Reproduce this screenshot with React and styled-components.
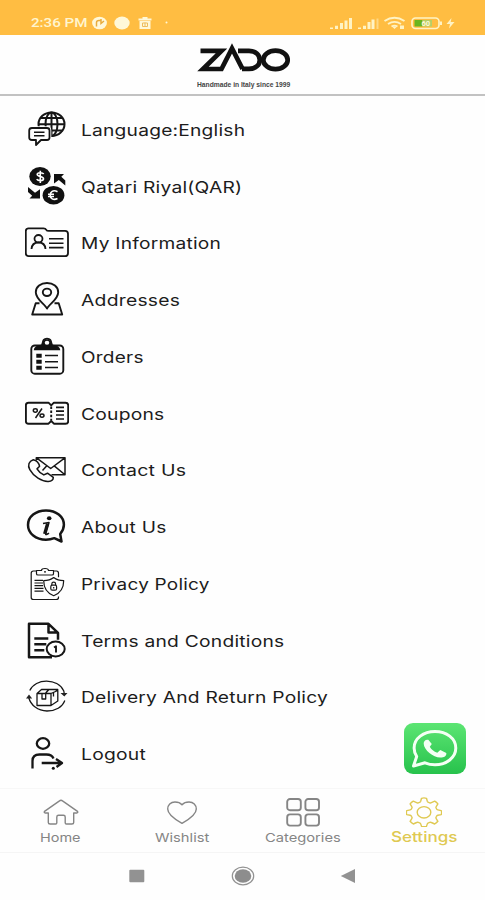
import React from 'react'
import styled, {createGlobalStyle} from 'styled-components'

const GlobalStyle = createGlobalStyle`
    * {
        box-sizing: border-box;
    }
    body {
        margin: 0;
        background: #fefefe;
        font-family: Inter, Roboto, "Liberation Sans", sans-serif;
    }
    svg {
        display: block;
        flex: none;
    }
`

/* ---------- menu icons, all on a 44x44 board ---------- */

const LanguageIcon = () => (
    <MenuSvg viewBox="0 0 44 44" $line={2}>
        <ellipse cx="26.5" cy="16.2" rx="13" ry="11.8"/>
        <ellipse cx="26.5" cy="16.2" rx="6" ry="11.8"/>
        <path d="M26.5 4v24M13.5 16.2h26M15.5 10h22M15.5 22.4h22"/>
        <path d="M7 20h15q2.5 0 2.5 2.5v7q0 2.5-2.5 2.5h-6l-4.5 4.500v-4.500h-4.500q-2.800 0-2.800-2.500v-7q0-2.500 2.800-2.500z" fill="#fff" stroke="#fff" strokeWidth="3.600"/>
        <path d="M7 20h15q2.500 0 2.500 2.500v7q0 2.500-2.500 2.500h-6l-5 5v-5h-4q-2.800 0-2.800-2.500v-7q0-2.500 2.800-2.500z" strokeWidth="1.800"/>
        <path d="M9 24.300h10.500M9 27.800h10.500" strokeWidth="1.500"/>
    </MenuSvg>
)

const CurrencyIcon = () => (
    <MenuSvg viewBox="0 0 44 44" $line={2}>
        <ellipse cx="15" cy="11.500" rx="10.700" ry="9.600" fill="#111" stroke="none"/>
        <ellipse cx="28.500" cy="30.200" rx="10.900" ry="9.300" fill="#111" stroke="none"/>
        <path d="M18.700 9c-1-1.600-6.500-2-6.500.5 0 2.400 6.300 1.600 6.300 4.200 0 2.600-5.500 2.400-6.800.4M15.300 5.700v12.200" stroke="#fff" strokeWidth="1.600"/>
        <path d="M32.500 26.700c-4.500-2.400-7.300.4-7.300 3.500s3 5.600 7.300 3.300M23 29.200h6M23 31.500h6" stroke="#fff" strokeWidth="1.600"/>
        <path d="M29 9h10l-2.700 2.700 4 3.800v5l-6.500-5.500-4.800 3.500z" fill="#111" stroke="none"/>
        <path d="M15 33.500h-10.500l2.700-2.700-4.200-3.800v-5l7 5.700 5-3.500z" fill="#111" stroke="none"/>
    </MenuSvg>
)

const InformationIcon = () => (
    <MenuSvg viewBox="0 0 44 44" $line={1.8}>
        <path d="M3.500 7.300h15q2 0 2.800 1.500.5 1 2.500 1h16.200q3 0 3 3v19.400q0 3-3 3h-36.200q-3 0-3-3v-22q0-2.900 2.700-2.900z"/>
        <ellipse cx="13.500" cy="17.700" rx="4" ry="3.700"/>
        <path d="M6.500 28q.5-6.500 7-6.500t7 6.500"/>
        <path d="M24 17.800h14.500M24 22.200h14.500M24 26.600h14.500" strokeWidth="1.600"/>
    </MenuSvg>
)

const AddressIcon = () => (
    <MenuSvg viewBox="0 0 44 44" $line={1.9}>
        <path d="M22 30.500c-2-4.500-11.200-9-11.200-16.300 0-5.500 5-9.200 11.200-9.200s11.200 3.700 11.200 9.200c0 7.300-9.200 11.800-11.200 16.300z"/>
        <ellipse cx="22" cy="14.300" rx="4.200" ry="3.700"/>
        <path d="M14.500 25.300h-3.800l-3.500 11.200h30l-3.500-11.200h-4.200"/>
    </MenuSvg>
)

const OrdersIcon = () => (
    <MenuSvg viewBox="0 0 44 44" $line={1.9}>
        <rect x="6.300" y="10.500" width="32" height="28.200" rx="3.500"/>
        <path d="M8.700 15.200q.5-5 7.500-5.500.6-5 5.800-5t5.800 5q7 .5 7.500 5.500z" fill="#111" stroke="none"/>
        <path d="M18 8.500q-.5-4.700 4-4.700t4 4.700"/>
        <ellipse cx="22" cy="7.700" rx="2.300" ry="2" fill="#fff" stroke="none"/>
        <path d="M11.300 18.700h5.400v4h-5.400zM11.300 24.700h5.400v4h-5.400zM11.300 30.700h5.400v4h-5.400z" fill="#111" stroke="none"/>
        <path d="M20 20.500h13M20 26.700h13M20 32.500h13" strokeWidth="1.500"/>
    </MenuSvg>
)

const CouponIcon = () => (
    <MenuSvg viewBox="0 0 44 44" $line={1.9}>
        <path d="M3.500 10.700h20l2.700 2.700 2.700-2.700h11.600q2.700 0 2.700 2.500v16q0 2.500-2.700 2.500h-11.600l-2.700-2.700-2.700 2.700h-20q-2.600 0-2.600-2.500v-16q0-2.500 2.600-2.500z"/>
        <path d="M26.200 14.500v14" strokeDasharray="2.500 1.600"/>
        <ellipse cx="10.300" cy="18.500" rx="2" ry="1.700" strokeWidth="1.500"/>
        <ellipse cx="17" cy="23.600" rx="2" ry="1.700" strokeWidth="1.500"/>
        <path d="M17 16.500l-6.500 9.500" strokeWidth="1.500"/>
        <path d="M31 15.300h8M31 19.200h8M31 23h8M31 27h8" strokeWidth="1.700"/>
    </MenuSvg>
)

const ContactIcon = () => (
    <MenuSvg viewBox="0 0 44 44" $line={1.5}>
        <path d="M11.300 12.500v-2.800h28.700v17h-13.500M11.500 9.900l14.200 10.600 14.200-10.600M39.700 26.500l-10.500-8.700M17.500 22.500l4.300-4.700"/>
        <path d="M8.300 11.700c-4.300 1.400-6 5.300-3.500 10 3.500 6.500 12.200 12 18.500 11.700 3-.2 5-2 5-4l-5.800-4.200-3.700 1.700c-3-1.500-5.300-3.300-6.800-6l2.600-2.600c-.6-2.800-2.800-5.700-6.300-6.600z"/>
    </MenuSvg>
)

const AboutIcon = () => (
    <MenuSvg viewBox="0 0 44 44" $line={2.5}>
        <path d="M36.500 36.500l-1.300-7.500c2.700-3.200 3.700-5.800 3.700-9.200 0-8.300-7.700-14.400-17.900-14.400s-18 6.100-18 14.600 7.900 14.700 18 14.700c3.300 0 5.700-.5 8.300-1.500z"/>
        <ellipse cx="24.200" cy="13.300" rx="2.300" ry="2" fill="#111" stroke="none"/>
        <path d="M18 18.500l6-1-3.300 11.500q0 1.500 3.300-.8" strokeWidth="1.500"/>
        <path d="M22.500 18.500l-3 10.300" strokeWidth="3"/>
    </MenuSvg>
)

const PrivacyIcon = () => (
    <MenuSvg viewBox="0 0 44 44" $line={1.2}>
        <path d="M11 9h-2.500q-2.300 0-2.300 2.200v24.300q0 2 2.300 2h22.700q2.300 0 2.300-2v-1M28.500 9h3q2 0 2 2.200v4"/>
        <path d="M11.500 8.500h5q0-2 3.500-2t3.500 2h5v3.200q0 1.300-1.500 1.300h-14q-1.500 0-1.500-1.300zM19 9.800h2M9.500 18.300h8.500M9.500 21h8.500M9.500 23.700h8.500M9.500 26.400h9M9.500 29.100h9"/>
        <path d="M28.700 15.500q4 3.200 10 3.200 0 11-10 15-10-4-10-15 6 0 10-3.200z" fill="#fff"/>
        <rect x="25.800" y="23.200" width="5.800" height="5" rx="1.500"/>
        <path d="M26.800 23v-1q0-1.800 1.900-1.800t1.900 1.800v1M28.700 25v1.500"/>
    </MenuSvg>
)

const TermsIcon = () => (
    <MenuSvg viewBox="0 0 44 44" $line={2.5}>
        <path d="M27 38.200h-23v-33.400h19.500l9.500 9v7M23.500 4.800v8.800h9.500M9.300 19.500h14M9.300 25.200h12M9.300 31.200h10"/>
        <ellipse cx="30.700" cy="30" rx="9" ry="7.500" fill="#fff" strokeWidth="2"/>
        <path d="M29 28.500l2-1.300v6.300" strokeWidth="1.900"/>
    </MenuSvg>
)

const DeliveryIcon = () => (
    <MenuSvg viewBox="0 0 44 44" $line={1.3}>
        <path d="M4.800 15.500c5.500-12.500 28-12.500 34 .5l.5 3M3.700 22.500c2 7.500 9 13.500 18.300 13.500 8.500 0 15.500-4 17.800-10.500"/>
        <path d="M35.500 18h7l-3.200 3.500zM1 23.500l3-4 3.200 4z" fill="#222" stroke="none"/>
        <path d="M12 18.500h14v12h-14zM26 30.500l6.800-4.500v-10.500l-6.800 3M12 18.500l4.500-4h16.300l-2 1.500M17 18v6h3.700v-6l3.300-3.500M20.700 18l3-3.500M28.500 17.500v4"/>
    </MenuSvg>
)

const LogoutIcon = () => (
    <MenuSvg viewBox="0 0 44 44" $line={2.3}>
        <ellipse cx="18" cy="11.500" rx="6.200" ry="5.300"/>
        <path d="M7.500 36.500v-7.500q0-6.500 7-6.500h7q5.500 0 7 4"/>
        <path d="M16.700 31h19M31 27l6 4-5.500 4"/>
        <circle cx="28.300" cy="36.300" r="1.500" fill="#111" stroke="none"/>
    </MenuSvg>
)

/* ---------- tab bar icons ---------- */

const HomeIcon = () => (
    <svg width="36" height="30" viewBox="0 0 36 30" fill="none" stroke="currentColor" strokeWidth="1.4" strokeLinejoin="round">
        <path d="M18 3.300q.8 0 1.500.6l15 10.500q.8 1.400-.8 1.600h-3v9.500q0 1.500-1.800 1.500h-5.500q-1.200 0-1.200-1.200v-5.800q0-1.700-1.800-1.700h-4.800q-1.800 0-1.800 1.700v5.800q0 1.200-1.200 1.200h-5.500q-1.800 0-1.800-1.500v-9.500h-3q-1.600-.2-.8-1.600l15-10.500q.7-.6 1.500-.6z"/>
    </svg>
)

const HeartIcon = () => (
    <svg width="36" height="30" viewBox="0 0 36 30" fill="none" stroke="currentColor" strokeWidth="1.4">
        <path d="M18 7.700c2-2.200 4.200-2.700 7-2.700 4.400 0 7.300 3 7.300 7 0 6-8.300 11-14.300 14.300-6-3.300-14.300-8.300-14.300-14.300 0-4 2.900-7 7.300-7 2.800 0 5 .5 7 2.700z"/>
    </svg>
)

const GridIcon = () => (
    <svg width="36" height="30" viewBox="0 0 36 30" fill="none" stroke="currentColor" strokeWidth="1.9">
        <rect x="2.200" y="2" width="13.600" height="11.200" rx="2.800"/>
        <rect x="20.400" y="2" width="13.600" height="11.200" rx="2.800"/>
        <rect x="2.200" y="17.400" width="13.600" height="11.200" rx="2.800"/>
        <rect x="20.400" y="17.400" width="13.600" height="11.200" rx="2.800"/>
    </svg>
)

const GearIcon = () => (
    <svg width="36" height="30" viewBox="0 0 36 30" fill="none" stroke="currentColor" strokeWidth="1.4" strokeLinejoin="round">
        <path d="M15.500 1.300q2.500-.8 5 0l.8 3q.3.800 1.200 1.100l1.200.4q.9.300 1.700-.1l3.300-1.500q2 1.200 3.200 2.700l-1.700 2.700q-.5.700-.1 1.400l.5 1q.3.700 1.200.9l3.500.7q.6 1.900 0 4l-3.500.7q-.9.200-1.200.9l-.5 1q-.4.700.1 1.400l1.700 2.700q-1.200 1.500-3.200 2.700l-3.300-1.500q-.8-.4-1.700-.1l-1.200.4q-.9.300-1.200 1.100l-.8 2.500q-2.500.8-5 0l-.8-2.500q-.3-.8-1.200-1.100l-1.200-.4q-.9-.3-1.700.1l-3.300 1.500q-2-1.200-3.200-2.700l1.700-2.700q.5-.7.100-1.400l-.5-1q-.3-.7-1.200-.9l-3.500-.7q-.6-2.100 0-4l3.500-.7q.9-.2 1.200-.9l.5-1q.4-.7-.1-1.400l-1.700-2.700q1.200-1.500 3.200-2.700l3.300 1.500q.8.400 1.700.1l1.200-.4q.9-.3 1.200-1.100z"/>
        <ellipse cx="18" cy="15.300" rx="6.800" ry="5.700"/>
    </svg>
)

const Logo = () => (
    <svg width="94" height="34" viewBox="0 0 94 34" fill="none" stroke="#111" strokeWidth="4.7" strokeMiterlimit="8">
        <path d="M4.500 7.900h21L7 26h18.500L36 5.500l10.500 20.300"/>
        <path d="M42 7.900h11c6.500 0 10.800 3.900 10.800 9s-4.300 9-10.800 9h-7"/>
        <ellipse cx="79.500" cy="16.900" rx="12.200" ry="9.200"/>
    </svg>
)

const StatusLeft = () => (
    <svg width="80" height="14" viewBox="0 0 80 14" fill="#fff8d8">
        <ellipse cx="7.500" cy="7" rx="7.400" ry="6.300"/>
        <path d="M4.500 10.500V6.500q0-2 2.500-2h2M9 3v4.500l3-2.500" fill="none" stroke="#e9ac3d" strokeWidth="1.500"/>
        <ellipse cx="30" cy="7" rx="7.700" ry="6.500"/>
        <path d="M46.500 2.500h4V1h5v1.500H59.500v2h-13zM47.500 5h11v8h-11z"/>
        <path d="M50.500 7v3.500h5V7zM53 6.500v4" fill="none" stroke="#eebd5c" strokeWidth="1"/>
        <circle cx="74.500" cy="6.500" r="1"/>
    </svg>
)

const StatusRight = () => (
    <svg width="126" height="14" viewBox="0 0 126 14" fill="#fff3c4">
        <path d="M0 11.500h3v1.500H0zM5 9.800h3V13H5zM10 7h3v6h-3zM14.500 4.500h3V13h-3zM19 2h3v11h-3z"/>
        <path d="M28 11.500h3v1.500h-3zM33 9.800h3V13h-3zM37.500 6h3v7h-3zM41.500 3.500h3V13h-3z"/>
        <path d="M46.500 2.500h2V13h-2z" opacity=".5"/>
        <g fill="none" stroke="#fff3c4" strokeWidth="1.9">
            <path d="M54.500 5q10-6.500 20 0M58 8q6.500-4.200 13 0M61.500 10.500q3-1.800 6 0"/>
        </g>
        <path d="M62 10.500h5L64.500 13zM70 9.500h4V13h-4z"/>
        <rect x="82" y="2" width="27" height="10.500" rx="3.500" fill="none" stroke="#fff3c4" strokeWidth="1.7"/>
        <path d="M84.500 4h8v6.500h-8z" fill="#69b51e"/>
        <path d="M92.500 4H102v6.500h-9.500z" fill="#b6cf68"/>
        <path d="M110 5.500h2V9h-2z"/>
        <text x="91.500" y="10" fontSize="7.500" fontWeight="700" fill="#fff8d8" fontFamily="Roboto">60</text>
        <path d="M121.500 2l-5 6h3.500l-1 4.500 5.500-6.500h-3.800z"/>
    </svg>
)

const menu = [
    {label: 'Language:English', icon: LanguageIcon, width: 164},
    {label: 'Qatari Riyal(QAR)', icon: CurrencyIcon, width: 161},
    {label: 'My Information', icon: InformationIcon, width: 140},
    {label: 'Addresses', icon: AddressIcon, width: 99},
    {label: 'Orders', icon: OrdersIcon, width: 63},
    {label: 'Coupons', icon: CouponIcon, width: 83},
    {label: 'Contact Us', icon: ContactIcon, width: 105},
    {label: 'About Us', icon: AboutIcon, width: 86},
    {label: 'Privacy Policy', icon: PrivacyIcon, width: 129},
    {label: 'Terms and Conditions', icon: TermsIcon, width: 203},
    {label: 'Delivery And Return Policy', icon: DeliveryIcon, width: 247},
    {label: 'Logout', icon: LogoutIcon, width: 65},
]

const tabs = [
    {label: 'Home', icon: HomeIcon, width: 41},
    {label: 'Wishlist', icon: HeartIcon, width: 54},
    {label: 'Categories', icon: GridIcon, width: 76},
    {label: 'Settings', icon: GearIcon, width: 67, active: true},
]

// stretches a line of text sideways until it fills the given width
function WideText({width, children, ...rest}) {
    const ref = React.useRef(null)
    const [scale, setScale] = React.useState(1)
    React.useLayoutEffect(() => {
        const fit = () => setScale(width / ref.current.offsetWidth)
        fit()
        document.fonts.ready.then(fit)
    }, [width])
    return (
        <WideBox {...rest} style={{width}}>
            <WideInner ref={ref} style={{transform: `scaleX(${scale})`}}>{children}</WideInner>
        </WideBox>
    )
}

export default function App() {
    return (
        <Screen>
            <GlobalStyle/>
            <StatusBar>
                <StatusGroup>
                    <Clock width={57}>2:36 PM</Clock>
                    <StatusLeft/>
                </StatusGroup>
                <StatusRight/>
            </StatusBar>
            <Header>
                <Logo/>
                <Tagline width={93}>Handmade in Italy since 1999</Tagline>
            </Header>
            <Menu>
                {menu.map(({label, icon: Icon, width}) => (
                    <MenuItem key={label}>
                        <Icon/>
                        <MenuLabel width={width}>{label}</MenuLabel>
                    </MenuItem>
                ))}
            </Menu>
            <WhatsappButton aria-label="WhatsApp">
                <svg width="62" height="52" viewBox="0 0 62 52">
                    <path d="M9.500 43l3.200-9.500c-1.800-2.800-2.600-5.500-2.600-8.500C10.100 15.500 19.500 8.500 31 8.500S51.800 15.500 51.800 25 42.500 41.800 31 41.800c-3.700 0-7-.7-10-2z" fill="none" stroke="#f4fff4" strokeWidth="3" strokeLinejoin="round"/>
                    <path d="M24.300 16.800c-2.700-.6-4.800 1.200-4.600 3.900.3 6.500 9.500 13.600 16.500 13.900 3.700.1 6.600-1.900 6.100-4.700l-6-2.900-3 2.700c-3.500-1.300-6-3.200-7.500-6l2-2.600z" fill="#f4fff4"/>
                </svg>
            </WhatsappButton>
            <TabBar>
                {tabs.map(({label, icon: Icon, width, active}) => (
                    <Tab key={label} $active={active}>
                        <Icon/>
                        <TabLabel width={width} $active={active}>{label}</TabLabel>
                    </Tab>
                ))}
            </TabBar>
            <SystemBar>
                <svg width="16" height="14" viewBox="0 0 16 14"><rect x=".3" y=".8" width="15" height="12.4" rx="1" fill="#929292"/></svg>
                <svg width="24" height="20" viewBox="0 0 24 20">
                    <ellipse cx="12" cy="10" rx="10.700" ry="8.800" fill="none" stroke="#929292" strokeWidth="1.2"/>
                    <ellipse cx="12" cy="10" rx="8.300" ry="6.800" fill="#8d8d8d"/>
                </svg>
                <svg width="16" height="16" viewBox="0 0 16 16"><path d="M.8 8L15 1v14z" fill="#929292"/></svg>
            </SystemBar>
        </Screen>
    )
}

const Screen = styled.div`
    position: relative;
    display: flex;
    flex-direction: column;
    width: 485px;
    height: 900px;
    overflow: hidden;
    background: #fefefe;
    color: #1c1c1c;
`

const WideBox = styled.div`
    white-space: nowrap;
`

const WideInner = styled.span`
    display: inline-block;
    transform-origin: 0 50%;
`

const StatusBar = styled.div`
    display: flex;
    flex: none;
    justify-content: space-between;
    align-items: flex-end;
    height: 35px;
    padding: 0 29px 5px 31px;
    background: #ffbd42;
`

const StatusGroup = styled.div`
    display: flex;
    align-items: center;
    gap: 4px;
`

const Clock = styled(WideText)`
    color: #fff5cf;
    font-size: 12.5px;
    line-height: 14px;
    font-family: Roboto, sans-serif;
    font-weight: 500;
`

const Header = styled.header`
    display: flex;
    flex: none;
    flex-direction: column;
    align-items: center;
    height: 61px;
    padding: 8px 0 0 1px;
    border-bottom: 2px solid #c2c2c2;
`

const Tagline = styled(WideText)`
    margin-top: 3px;
    font-family: "Liberation Sans", sans-serif;
    font-size: 7px;
    line-height: 9px;
    font-weight: 700;
    color: #444;
`

const Menu = styled.nav`
    display: flex;
    flex: none;
    flex-direction: column;
    height: 692px;
    padding-top: 5.5px;
`

const MenuItem = styled.div`
    display: flex;
    align-items: center;
    gap: 12px;
    height: 56.75px;
    padding-left: 25px;
`

const MenuSvg = styled.svg`
    width: 44px;
    height: 44px;
    fill: none;
    stroke: #161616;
    stroke-width: ${props => props.$line};
    stroke-linejoin: round;
`

const MenuLabel = styled(WideText)`
    font-size: 16px;
    line-height: 24px;
    letter-spacing: 0.2px;
`

const WhatsappButton = styled.button`
    position: absolute;
    right: 19px;
    bottom: 126px;
    width: 62px;
    height: 51px;
    padding: 0;
    border: 0;
    border-radius: 9px;
    overflow: hidden;
    background: linear-gradient(#5ce573, #27c24c);
`

const TabBar = styled.div`
    display: grid;
    flex: none;
    grid-template-columns: repeat(4, 1fr);
    height: 65px;
    border-top: 1px solid #f7f7f7;
    border-bottom: 1px solid #f5f5f5;
`

const Tab = styled.div`
    display: flex;
    flex-direction: column;
    align-items: center;
    padding-top: 8px;
    color: ${props => props.$active ? '#dfc952' : '#858585'};
`

const TabLabel = styled(WideText)`
    margin-top: ${props => props.$active ? '2px' : '3px'};
    font-size: ${props => props.$active ? '14.5px' : '12px'};
    font-weight: ${props => props.$active ? 500 : 400};
    line-height: 16px;
`

const SystemBar = styled.div`
    display: flex;
    flex: 1;
    align-items: center;
    justify-content: space-between;
    padding: 0 129px 1px 129px;
`
